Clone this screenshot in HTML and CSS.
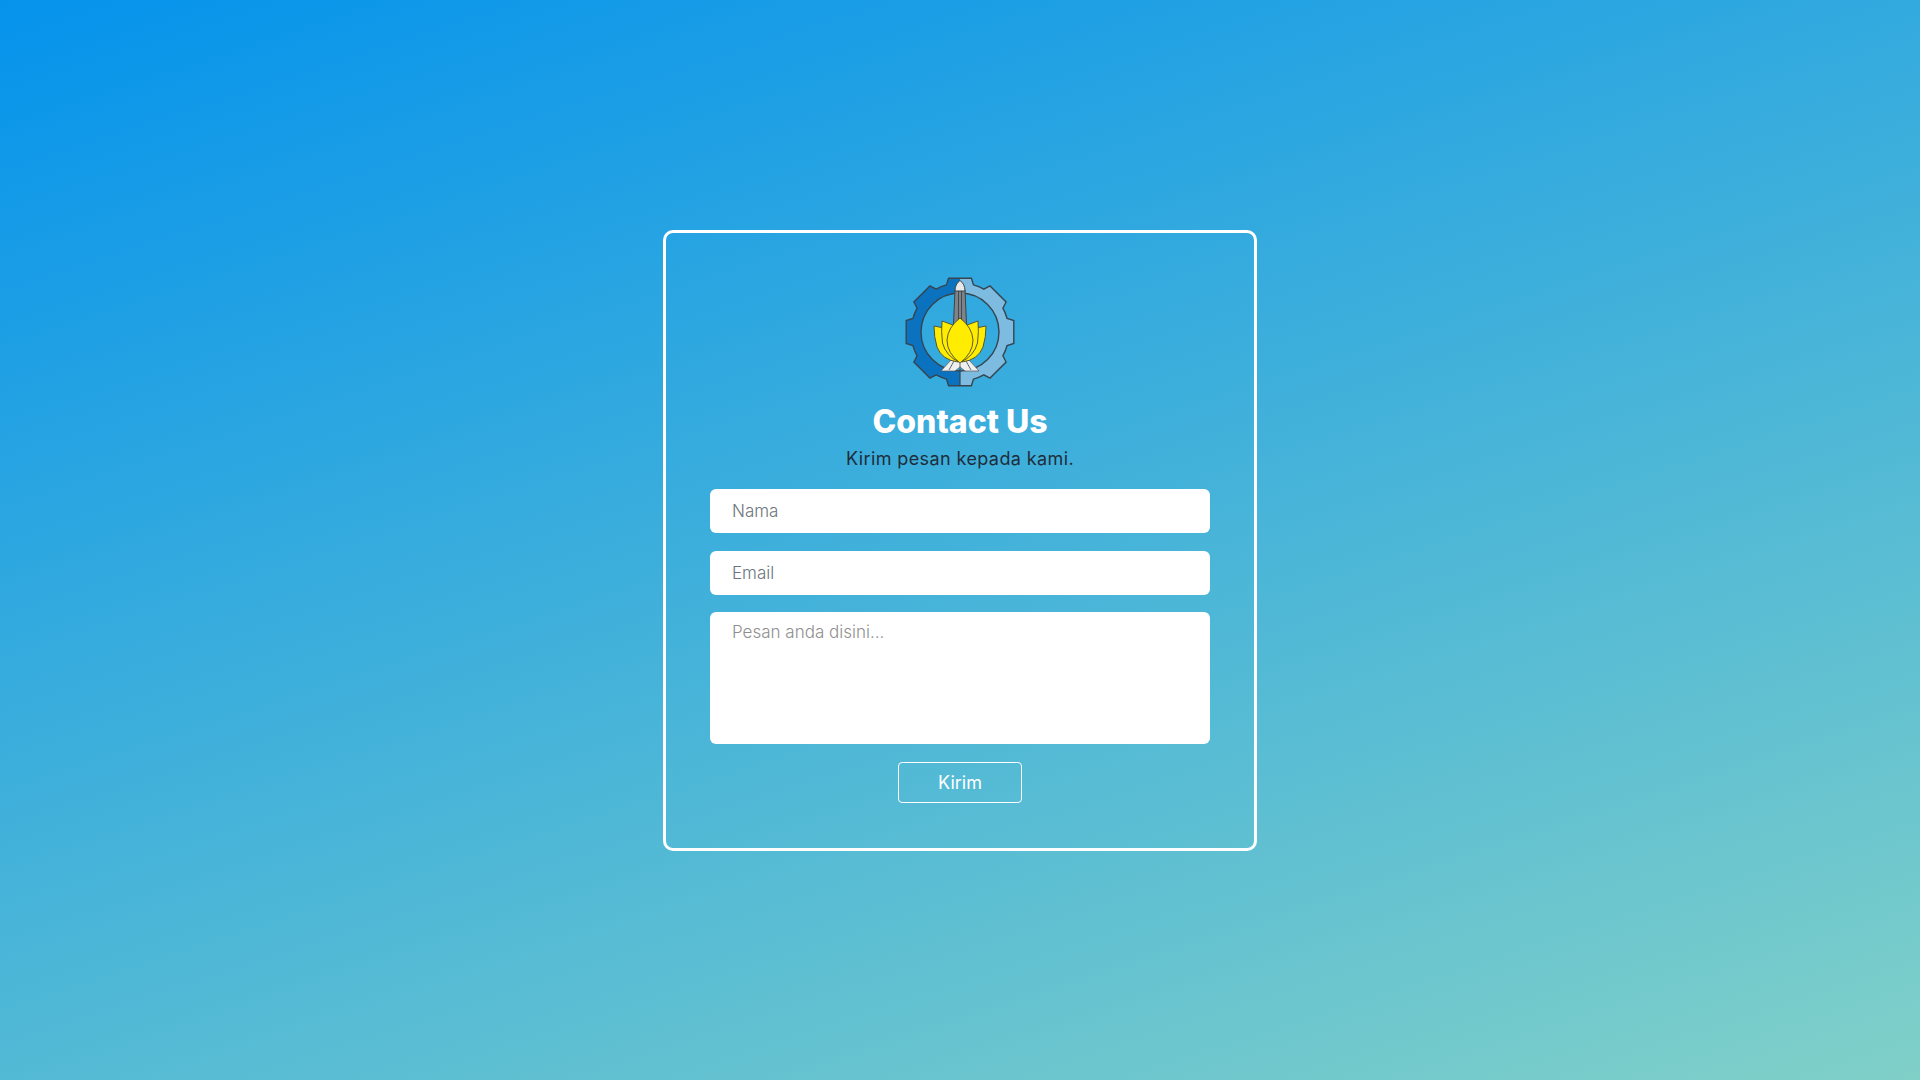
FILE: index.html
```html
<!DOCTYPE html>
<html lang="id">
<head>
<meta charset="utf-8">
<title>Contact Us</title>
<link rel="stylesheet" href="styles.css">
</head>
<body>
<main class="card">
  <svg class="logo" viewBox="0 0 110 110" xmlns="http://www.w3.org/2000/svg" aria-label="Logo">
    <defs>
      <path id="gear" fill-rule="evenodd" d="M41.5 7.9 L43.6 1.2 L66.4 1.2 L68.5 7.9 A49 49 0 0 1 78.8 12.1 L85 8.9 L101.1 25 L97.9 31.2 A49 49 0 0 1 102.1 41.5 L108.8 43.6 L108.8 66.4 L102.1 68.5 A49 49 0 0 1 97.9 78.8 L101.1 85 L85 101.1 L78.8 97.9 A49 49 0 0 1 68.5 102.1 L66.4 108.8 L43.6 108.8 L41.5 102.1 A49 49 0 0 1 31.2 97.9 L25 101.1 L8.9 85 L12.1 78.8 A49 49 0 0 1 7.9 68.5 L1.2 66.4 L1.2 43.6 L7.9 41.5 A49 49 0 0 1 12.1 31.2 L8.9 25 L25 8.9 L31.2 12.1 A49 49 0 0 1 41.5 7.9 Z M55 16 A39 39 0 1 0 55 94 A39 39 0 1 0 55 16 Z"/>
      <clipPath id="left"><rect x="0" y="0" width="55" height="110"/></clipPath>
      <clipPath id="right"><rect x="55" y="0" width="55" height="110"/></clipPath>
    </defs>
    <use href="#gear" class="gear-dark" clip-path="url(#left)"/>
    <use href="#gear" class="gear-light" clip-path="url(#right)"/>
    <use href="#gear" class="gear-line"/>
    <path class="line" d="M55 92 V109"/>
    <path class="tower" d="M50 13 L60 13 L62 58 L48 58 Z"/>
    <path class="tower-line" d="M53.5 13 V56 M56.5 13 V56"/>
    <path class="tip" d="M50 14 Q50 7 55 3.5 Q60 7 60 14 Z"/>
    <path class="base" d="M36 94 L46 83 L64 83 L74 94 L60 94 L55 90 L50 94 Z"/>
    <path class="line-thin" d="M44 93 L49 84 M66 93 L61 84 M55 85 V92"/>
    <path class="petal" d="M29 49 L39 51 L53 85 Q37 83 32 70 Q29 60 29 49 Z"/>
    <path class="petal" d="M81 49 L71 51 L57 85 Q73 83 78 70 Q81 60 81 49 Z"/>
    <path class="petal" d="M37 44 L48 48 L54 85 Q41 79 37.5 66 Q36 54 37 44 Z"/>
    <path class="petal" d="M73 44 L62 48 L56 85 Q69 79 72.5 66 Q74 54 73 44 Z"/>
    <path class="petal" d="M55 41 Q67 50 68 63 Q68 76 55 86 Q42 76 42 63 Q43 50 55 41 Z"/>
  </svg>
  <h1 class="title">Contact Us</h1>
  <p class="lead">Kirim pesan kepada kami.</p>
  <form class="form">
    <input class="field" type="text" placeholder="Nama">
    <input class="field" type="email" placeholder="Email">
    <textarea class="field area" placeholder="Pesan anda disini..."></textarea>
    <button class="send" type="button">Kirim</button>
  </form>
</main>
</body>
</html>
```
FILE: styles.css
```css
* { box-sizing: border-box; }
html, body { height: 100%; margin: 0; }
body {
  min-height: 100vh;
  display: flex;
  align-items: center;
  justify-content: center;
  padding-top: 1px;
  background: linear-gradient(162deg, #0593ec 0%, #80d0c8 100%);
  font-family: "Inter", "Noto Sans", sans-serif;
}
.card {
  width: 594px;
  height: 621px;
  border: 3px solid #fff;
  border-radius: 10px;
  padding: 44px 44px 45px;
  display: flex;
  flex-direction: column;
  align-items: center;
}
.logo { width: 110px; height: 110px; flex: none; display: block; }
.gear-dark { fill: #0b72bf; }
.gear-light { fill: #7dbce0; }
.gear-line { fill: none; stroke: #36454f; stroke-width: 1.4; }
.line { stroke: #36454f; stroke-width: 1.2; }
.line-thin { stroke: #5f666b; stroke-width: 1; fill: none; }
.base { fill: #efefef; stroke: #555; stroke-width: 0.7; }
.tower { fill: #7f8387; stroke: #36454f; stroke-width: 1; }
.tower-line { stroke: #36454f; stroke-width: 0.9; }
.tip { fill: #e8e8e8; stroke: #36454f; stroke-width: 1; }
.petal { fill: #ffec00; stroke: #4a4a30; stroke-width: 0.9; stroke-linejoin: round; }
.title {
  margin: 15px 0 0;
  font-size: 32px;
  line-height: 40px;
  font-weight: 800;
  color: #fff;
}
.lead {
  margin: 3px 0 0;
  font-size: 18px;
  line-height: 28px;
  letter-spacing: 0.4px;
  color: #1f2d3a;
}
.form {
  margin-top: 16px;
  width: 500px;
  display: flex;
  flex-direction: column;
  align-items: center;
  gap: 18px;
}
.field {
  width: 500px;
  height: 44px;
  flex: none;
  border: 0;
  border-radius: 6px;
  background: #fff;
  padding: 0 22px;
  font: 300 17px/24px "Inter", "Noto Sans", sans-serif;
  color: #444;
  display: block;
  resize: none;
  outline: none;
}
.field::placeholder { color: #6c757d; opacity: 1; }
.area { height: 132px; padding: 8px 22px; margin-top: -1px; }
.area::placeholder { color: #8f8f8f; }
.send {
  width: 124px;
  height: 41px;
  border: 1px solid #fff;
  border-radius: 4px;
  background: transparent;
  color: #fff;
  font: 400 18px "Inter", "Noto Sans", sans-serif;
  padding: 0;
}
```
